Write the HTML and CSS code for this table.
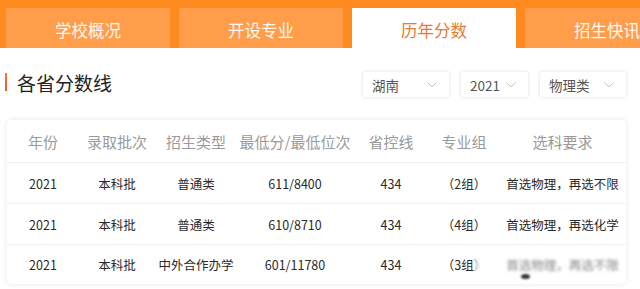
FILE: index.html
```html
<!DOCTYPE html>
<html lang="zh-CN">
<head>
<meta charset="utf-8">
<title>历年分数</title>
<link rel="stylesheet" href="styles.css">
</head>
<body>
<nav class="tabs">
  <div class="tab">学校概况</div>
  <div class="tab">开设专业</div>
  <div class="tab active">历年分数</div>
  <div class="tab">招生快讯</div>
</nav>

<section class="toolbar">
  <h2 class="title"><span class="title-bar"></span>各省分数线</h2>
  <div class="filters">
    <div class="select sel-wide"><span>湖南</span><svg class="chev" viewBox="0 0 10 6" width="10" height="6"><polyline points="0.5,0.5 5,5 9.5,0.5"/></svg></div>
    <div class="select sel-narrow"><span>2021</span><svg class="chev" viewBox="0 0 10 6" width="10" height="6"><polyline points="0.5,0.5 5,5 9.5,0.5"/></svg></div>
    <div class="select sel-wide"><span>物理类</span><svg class="chev" viewBox="0 0 10 6" width="10" height="6"><polyline points="0.5,0.5 5,5 9.5,0.5"/></svg></div>
  </div>
</section>

<section class="card">
  <div class="row head">
    <div>年份</div><div>录取批次</div><div>招生类型</div><div>最低分/最低位次</div><div>省控线</div><div>专业组</div><div>选科要求</div>
  </div>
  <div class="row">
    <div>2021</div><div>本科批</div><div>普通类</div><div>611/8400</div><div>434</div><div>（2组）</div><div>首选物理，再选不限</div>
  </div>
  <div class="row">
    <div>2021</div><div>本科批</div><div>普通类</div><div>610/8710</div><div>434</div><div>（4组）</div><div>首选物理，再选化学</div>
  </div>
  <div class="row last">
    <div>2021</div><div>本科批</div><div>中外合作办学</div><div>601/11780</div><div>434</div><div>（3组）</div><div>首选物理，再选不限</div>
  </div>
  <div class="smudge"></div>
  <div class="blob"></div>
</section>
</body>
</html>
```

FILE: styles.css
```css
* { box-sizing: border-box; }

html, body {
  margin: 0;
  padding: 0;
  background: #ffffff;
}

body {
  width: 640px;
  height: 289px;
  overflow: hidden;
  font-family: "Noto Sans CJK SC", "Noto Sans", sans-serif;
  color: #333;
}

.tabs {
  display: flex;
  gap: 9px;
  padding: 8px 0 0 6px;
  background: #ff8b20;
  overflow: hidden;
}

.tab {
  flex: 0 0 164px;
  height: 40px;
  padding-top: 3px;
  display: flex;
  align-items: center;
  justify-content: center;
  background: #ff9d4b;
  color: #fff8ef;
  font-size: 16.5px;
}

.tab.active {
  background: #ffffff;
  color: #ea7935;
}

.toolbar {
  display: flex;
  align-items: center;
  height: 27px;
  margin-top: 23px;
  padding: 0 13px 0 5px;
}

.title {
  display: flex;
  align-items: center;
  margin: 0 0 5px;
  font-size: 19px;
  font-weight: normal;
  color: #222;
}

.title-bar {
  width: 2px;
  height: 18px;
  margin-right: 10px;
  background: linear-gradient(#f57a3a, #ee5a25);
}

.filters {
  display: flex;
  gap: 10px;
  margin-left: auto;
}

.select {
  height: 27px;
  display: flex;
  align-items: center;
  justify-content: space-between;
  padding: 0 12px 0 9px;
  border: 1px solid #f2f2f2;
  border-radius: 3px;
  box-shadow: 0 0 3px rgba(0, 0, 0, 0.07);
  font-size: 13.5px;
  color: #555;
}

.sel-wide { width: 88px; }
.sel-narrow { width: 69px; }

.chev {
  fill: none;
  stroke: #c4c4c4;
  stroke-width: 1;
}

.card {
  position: relative;
  margin: 22px 14px 0 7px;
  background: #fff;
  border-radius: 5px;
  box-shadow: 0 0 6px rgba(0, 0, 0, 0.09);
  overflow: hidden;
}

.row {
  display: grid;
  grid-template-columns: 72px 76px 82px 116px 76px 70px 127px;
  align-items: center;
  height: 41px;
  border-top: 1.5px solid #eeeeee;
  text-align: center;
  font-size: 12.5px;
  color: #2a2a2a;
  white-space: nowrap;
}

.row.head {
  height: 42px;
  border-top: none;
  font-size: 15px;
  color: #9a9a9a;
}

.row.last { height: 40px; }

.smudge {
  position: absolute;
  left: 468px;
  top: 128px;
  width: 148px;
  height: 34px;
  background: rgba(255, 255, 255, 0.45);
  backdrop-filter: blur(1.6px);
}

.blob {
  position: absolute;
  left: 514px;
  top: 154px;
  width: 9px;
  height: 5px;
  border-radius: 50%;
  background: #333;
  filter: blur(1px);
}
```
